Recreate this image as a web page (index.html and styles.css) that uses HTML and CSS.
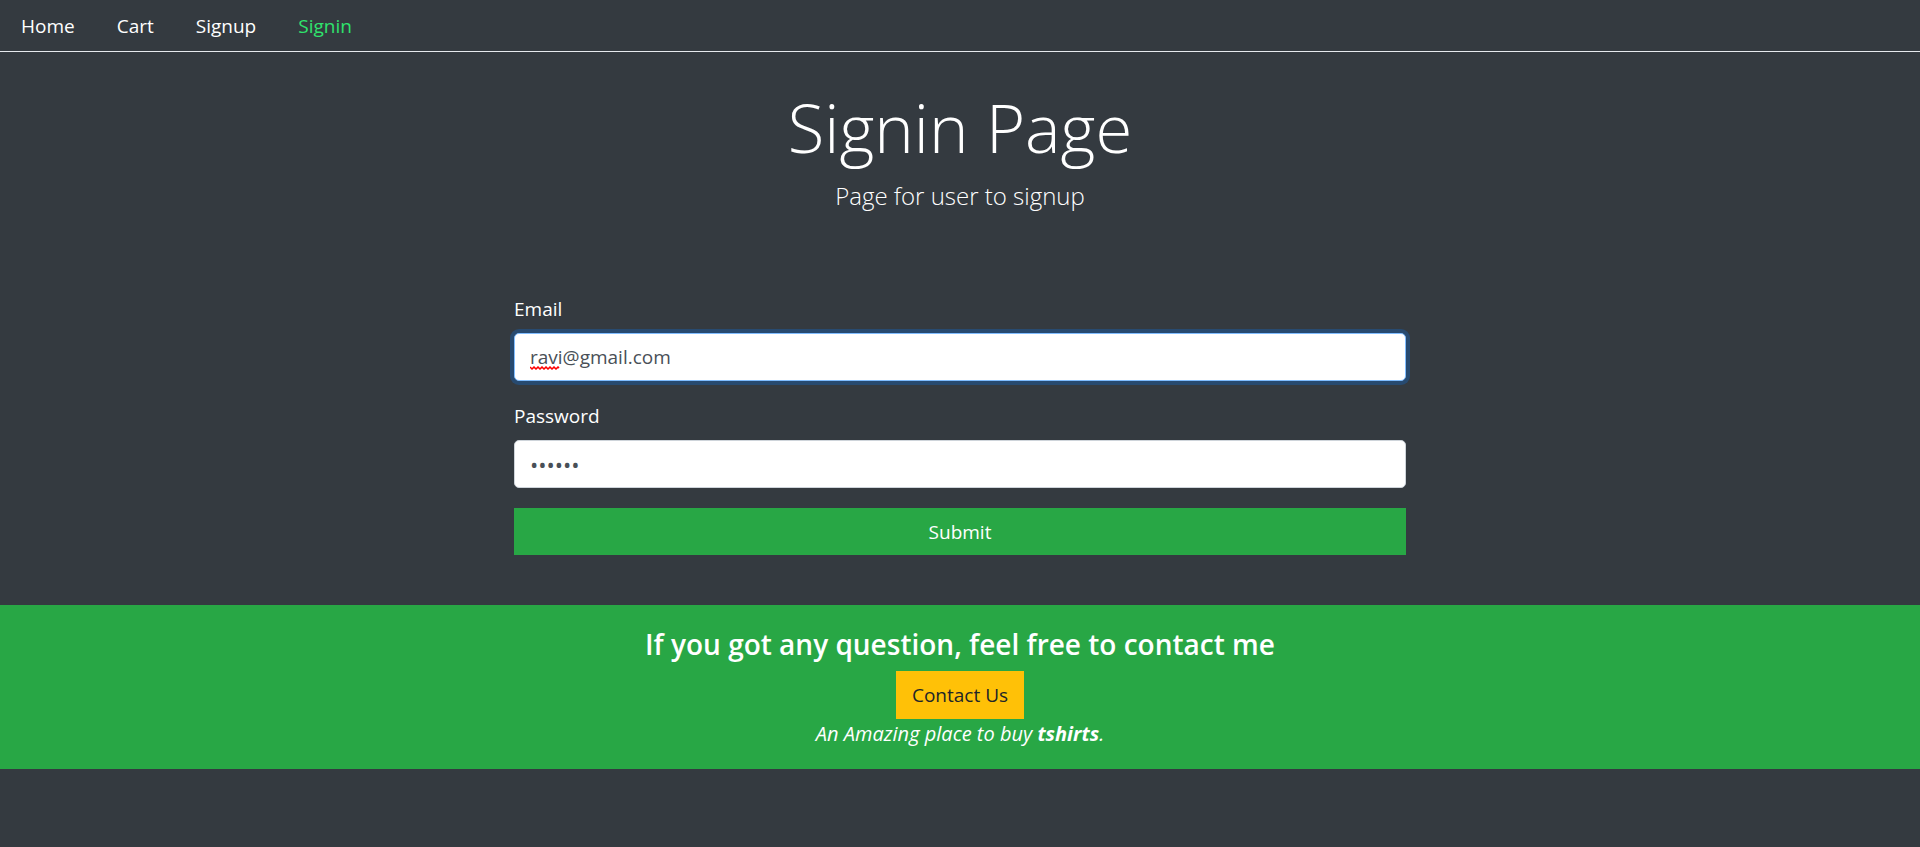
FILE: index.html
```html
<!DOCTYPE html>
<html lang="en">
<head>
<meta charset="utf-8">
<meta name="viewport" content="width=device-width, initial-scale=1">
<title>Signin Page</title>
<link rel="stylesheet" href="styles.css">
</head>
<body>
<nav class="nav">
  <a class="nav-link" href="#">Home</a>
  <a class="nav-link" href="#">Cart</a>
  <a class="nav-link" href="#">Signup</a>
  <a class="nav-link active" href="#" aria-current="page">Signin</a>
</nav>
<header class="hero">
  <h1 class="title">Signin Page</h1>
  <p class="lead">Page for user to signup</p>
</header>
<main class="content">
  <form class="form">
    <div class="group">
      <label for="email">Email</label>
      <div class="field">
        <input class="control focused" id="email" type="email" value="ravi@gmail.com" spellcheck="false">
        <svg class="squiggle" width="31" height="4" viewBox="0 0 31 4" aria-hidden="true"><path d="M0 1l2 2 2-2 2 2 2-2 2 2 2-2 2 2 2-2 2 2 2-2 2 2 2-2 2 2 2-2 1 1" fill="none" stroke="#f00" stroke-width="1.5"/></svg>
      </div>
    </div>
    <div class="group">
      <label for="password">Password</label>
      <input class="control password" id="password" type="password" value="secret">
    </div>
    <button class="btn btn-success" type="button">Submit</button>
  </form>
</main>
<footer class="footer">
  <h4 class="question">If you got any question, feel free to contact me</h4>
  <button class="btn btn-warning" type="button">Contact Us</button>
  <p class="tagline">An Amazing place to buy <strong>tshirts</strong>.</p>
</footer>
</body>
</html>
```
FILE: styles.css
```css
* { box-sizing: border-box; }
body {
  margin: 0;
  background: #343a40;
  color: #fff;
  font-family: "Open Sans", "Noto Sans", sans-serif;
  font-size: 19px;
  line-height: 30px;
}
h1, h4, p { margin: 0; }
.nav {
  display: flex;
  border-bottom: 1px solid #e6eaee;
}
.nav-link {
  padding: 11px 21px 10px;
  color: #fff;
  text-decoration: none;
}
.nav-link.active { color: #2fe36d; }
.hero {
  padding: 33px 20px 79px;
  text-align: center;
}
.title {
  font-size: 67px;
  font-weight: 300;
  line-height: 84px;
}
.lead {
  padding-top: 8px;
  font-size: 24px;
  font-weight: 300;
  line-height: 38px;
}
.content {
  display: grid;
  grid-template-columns: 1fr 2fr 1fr;
  padding: 0 30px 50px;
}
.form {
  grid-column: 2;
  display: flex;
  flex-direction: column;
  gap: 20px;
  padding: 0 19px;
}
.group {
  display: flex;
  flex-direction: column;
  gap: 9px;
}
.field {
  position: relative;
  display: flex;
}
.control {
  width: 100%;
  height: 48px;
  padding: 0 15px;
  border: 1px solid #ced4da;
  border-radius: 5px;
  background: #fff;
  color: #495057;
  font: inherit;
}
.control.focused {
  border-color: #80bdff;
  box-shadow: 0 0 0 4px rgba(0, 123, 255, 0.25);
  outline: 0;
}
.control.password { font-size: 22px; }
.squiggle {
  position: absolute;
  left: 16px;
  bottom: 11px;
}
.btn {
  height: 48px;
  padding: 0 16px;
  border: 0;
  font: inherit;
}
.btn-success { height: 47px; background: #28a745; color: #fff; }
.btn-warning { background: #ffc107; color: #212529; }
.footer {
  padding: 19px 20px 20px;
  background: #28a745;
  text-align: center;
}
.question {
  padding-bottom: 7px;
  font-size: 28px;
  font-weight: 600;
  line-height: 40px;
}
.tagline { font-size: 20px; font-style: italic; }
```
